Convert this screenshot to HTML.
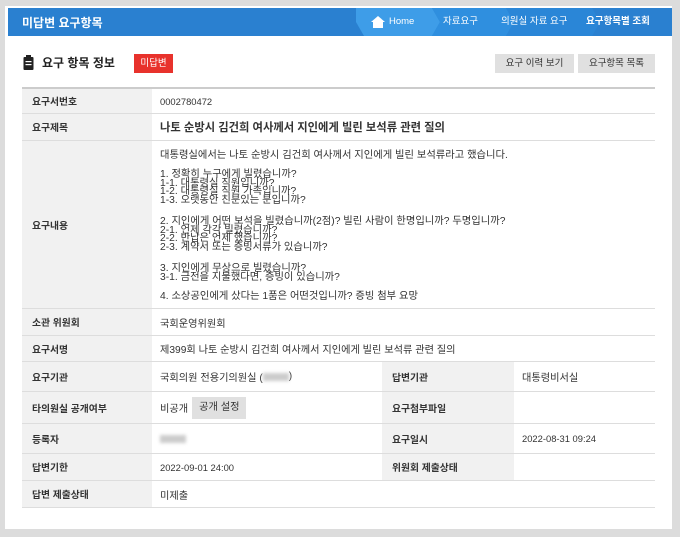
<!DOCTYPE html>
<html><head><meta charset="utf-8"><style>
*{margin:0;padding:0;box-sizing:border-box}
body{width:680px;height:537px;background:#dcdcdc;font-family:"Liberation Sans","Noto Sans CJK KR",sans-serif;position:relative;overflow:hidden}
.panel{position:absolute;left:5px;top:6px;width:667px;height:523px;background:#fff}
.hdr{position:absolute;left:8px;top:8px;width:664px;height:28px;background:#2a80d0}
.hdr .t{position:absolute;left:14px;top:6px;color:#fff;font-size:12px;font-weight:bold}
.bc{position:absolute;top:0;height:28px;color:#fff;font-size:9.5px;line-height:28px}
.row{position:absolute;left:22px;width:633px;border-bottom:1px solid #ddd;font-size:10.2px;color:#333}
.lab{position:absolute;left:0;top:0;bottom:0;width:130px;background:#f1f1f1;padding-left:10px;font-weight:bold;display:flex;align-items:center;font-size:9.8px}
.val{position:absolute;left:138px;top:0;bottom:0;display:flex;align-items:center}
.lab2{position:absolute;left:360px;top:0;bottom:0;width:132px;background:#f1f1f1;padding-left:10px;font-weight:bold;display:flex;align-items:center;font-size:9.8px}
.val2{position:absolute;left:500px;top:0;bottom:0;display:flex;align-items:center}
.btn{position:absolute;top:54px;height:19px;background:#e0e0e0;font-size:9.5px;line-height:19px;text-align:center;color:#333}
.ln{position:absolute;left:138px;font-size:10.3px;line-height:9px;white-space:nowrap;color:#333}
.blur{display:inline-block;width:26px;height:8px;background:#ccc;filter:blur(1.5px);vertical-align:middle}
.lat{font-size:9.4px}
</style></head><body>
<div class="panel"></div>
<div class="hdr">
<div class="t">미답변 요구항목</div>
<svg style="position:absolute;left:348px;top:0" width="316" height="28">
<polygon points="0,0 76,0 84,14 76,28 8,28 0,14" fill="#3e9de8"/>
<polygon points="76,0 150,0 158,14 150,28 76,28 84,14" fill="#2f8fdf"/>
<polygon points="150,0 236,0 244,14 236,28 150,28 158,14" fill="#2a86d7"/>
<path d="M15 14 L22 8 L29 14 H27 V20 H17 V14 Z" fill="#fff"/>
</svg>
<div class="bc" style="left:381px">Home</div>
<div class="bc" style="left:435px">자료요구</div>
<div class="bc" style="left:493px">의원실 자료 요구</div>
<div class="bc" style="left:578px;font-weight:bold">요구항목별 조회</div>
</div>
<svg style="position:absolute;left:23px;top:55px" width="11" height="15"><rect x="0.5" y="2" width="10" height="13" rx="1" fill="#222"/><rect x="3" y="0" width="5" height="3" fill="#222"/><rect x="2.5" y="6" width="6" height="1.2" fill="#fff"/><rect x="2.5" y="9" width="6" height="1.2" fill="#fff"/></svg>
<div style="position:absolute;left:42px;top:54px;font-size:12px;font-weight:bold;color:#222">요구 항목 정보</div>
<div style="position:absolute;left:134px;top:54px;width:39px;height:19px;background:#e8322c;color:#fff;font-size:9.5px;line-height:19px;text-align:center">미답변</div>
<div class="btn" style="left:495px;width:79px">요구 이력 보기</div>
<div class="btn" style="left:578px;width:77px">요구항목 목록</div>
<div style="position:absolute;left:22px;top:87px;width:633px;height:2px;background:#ccc"></div>
<div class="row" style="top:89px;height:25px"><div class="lab">요구서번호</div><div class="val lat">0002780472</div></div>
<div class="row" style="top:114px;height:27px"><div class="lab">요구제목</div><div class="val" style="font-weight:bold;font-size:11.3px">나토 순방시 김건희 여사께서 지인에게 빌린 보석류 관련 질의</div></div>
<div class="row" style="top:141px;height:168px"><div class="lab">요구내용</div></div>
<div class="ln" style="left:160px;top:151px">대통령실에서는 나토 순방시 김건희 여사께서 지인에게 빌린 보석류라고 했습니다.</div>
<div class="ln" style="left:160px;top:170px">1. 정확히 누구에게 빌렸습니까?</div>
<div class="ln" style="left:160px;top:179px">1-1. 대통령실 직원입니까?</div>
<div class="ln" style="left:160px;top:187px">1-2. 대통령실 직원 가족입니까?</div>
<div class="ln" style="left:160px;top:196px">1-3. 오랫동안 친분있는 분입니까?</div>
<div class="ln" style="left:160px;top:217px">2. 지인에게 어떤 보석을 빌렸습니까(2점)? 빌린 사람이 한명입니까? 두명입니까?</div>
<div class="ln" style="left:160px;top:226px">2-1. 언제 각각 빌렸습니까?</div>
<div class="ln" style="left:160px;top:234px">2-2. 반납은 언제 했습니까?</div>
<div class="ln" style="left:160px;top:243px">2-3. 계약서 또는 증빙서류가 있습니까?</div>
<div class="ln" style="left:160px;top:264px">3. 지인에게 무상으로 빌렸습니까?</div>
<div class="ln" style="left:160px;top:273px">3-1. 금전을 지불했다면, 증빙이 있습니까?</div>
<div class="ln" style="left:160px;top:292px">4. 소상공인에게 샀다는 1품은 어떤것입니까? 증빙 첨부 요망</div>
<div class="row" style="top:309px;height:27px"><div class="lab">소관 위원회</div><div class="val">국회운영위원회</div></div>
<div class="row" style="top:336px;height:26px"><div class="lab">요구서명</div><div class="val">제399회 나토 순방시 김건희 여사께서 지인에게 빌린 보석류 관련 질의</div></div>
<div class="row" style="top:362px;height:30px"><div class="lab">요구기관</div><div class="val">국회의원 전용기의원실 (<span class="blur"></span>)</div><div class="lab2">답변기관</div><div class="val2">대통령비서실</div></div>
<div class="row" style="top:392px;height:32px"><div class="lab">타의원실 공개여부</div><div class="val">비공개 <span style="display:inline-block;margin-left:4px;background:#e0e0e0;padding:0 7px;line-height:22px">공개 설정</span></div><div class="lab2">요구첨부파일</div></div>
<div class="row" style="top:424px;height:30px"><div class="lab">등록자</div><div class="val"><span class="blur"></span></div><div class="lab2">요구일시</div><div class="val2 lat">2022-08-31 09:24</div></div>
<div class="row" style="top:454px;height:27px"><div class="lab">답변기한</div><div class="val lat">2022-09-01 24:00</div><div class="lab2">위원회 제출상태</div></div>
<div class="row" style="top:481px;height:27px"><div class="lab">답변 제출상태</div><div class="val">미제출</div></div>
</body></html>
